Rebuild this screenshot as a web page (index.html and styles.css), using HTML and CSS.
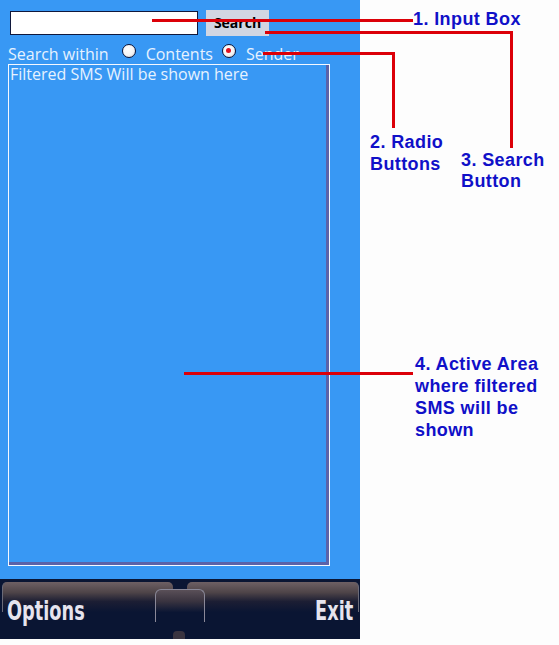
FILE: index.html
```html
<!DOCTYPE html>
<html>
<head>
<meta charset="utf-8">
<link rel="stylesheet" href="styles.css">
</head>
<body>
<div class="page">
  <div class="phone">
    <div class="search-row">
      <div class="input-box"></div>
      <div class="search-btn">Search</div>
    </div>
    <div class="filter-row">
      <span class="lbl">Search within</span>
      <span class="radio first"></span>
      <span class="lbl">Contents</span>
      <span class="radio checked"></span>
      <span class="lbl">Sender</span>
    </div>
    <div class="results">
      <div class="results-inner">Filtered SMS Will be shown here</div>
    </div>
    <div class="spacer"></div>
    <div class="softkeys">
      <div class="tab tab-left"></div>
      <div class="tab tab-right"></div>
      <div class="notch"></div>
      <div class="bump"></div>
      <span class="sk sk-left">Options</span>
      <span class="sk sk-right">Exit</span>
    </div>
  </div>

  <div class="overlay">
    <div class="line h l1"></div>
    <div class="line h l2"></div>
    <div class="line v l2v"></div>
    <div class="line h l3"></div>
    <div class="line v l3v"></div>
    <div class="line h l4"></div>
    <div class="note n1">1. Input Box</div>
    <div class="note n2">2. Radio<br>Buttons</div>
    <div class="note n3">3. Search<br>Button</div>
    <div class="note n4">4. Active Area<br>where filtered<br>SMS will be<br>shown</div>
  </div>
</div>
</body>
</html>
```

FILE: styles.css
```css
* { box-sizing: border-box; }
html, body { margin: 0; padding: 0; background: #fdfdfd; }
.page {
  position: relative;
  width: 559px;
  height: 645px;
  display: flex;
}
.phone {
  width: 360px;
  height: 639px;
  background: #3898f4;
  display: flex;
  flex-direction: column;
  font-family: "Open Sans", "DejaVu Sans", sans-serif;
}
.search-row {
  display: flex;
  align-items: flex-start;
  gap: 8px;
  padding: 10px 0 0 10px;
  height: 36px;
}
.input-box {
  margin-top: 1px;
  width: 188px;
  height: 24px;
  background: #fff;
  border: 1px solid #10183c;
}
.search-btn {
  width: 63px;
  height: 26px;
  background: #d2d6e2;
  color: #000;
  font-weight: 700;
  font-size: 14px;
  line-height: 26px;
  text-align: center;
}
.filter-row {
  display: flex;
  align-items: flex-start;
  height: 28px;
  padding: 8px 0 0 8px;
  color: #e6f2ff;
  font-size: 16px;
}
.filter-row .lbl { line-height: 20px; }
.radio {
  width: 14px;
  height: 14px;
  border-radius: 50%;
  border: 1.5px solid #0c1438;
  background: radial-gradient(circle at 40% 35%, #ffffff 0%, #f4f4f4 55%, #c8c8d0 100%);
  margin: 0 10px 0 9px;
  position: relative;
}
.radio.first { margin-left: 13px; }
.radio.checked::after {
  content: "";
  position: absolute;
  left: 3px;
  top: 3px;
  width: 5px;
  height: 5px;
  border-radius: 50%;
  background: #e01020;
}
.results {
  margin: 0 0 0 8px;
  width: 322px;
  height: 502px;
  border: 1px solid #f4f8ff;
}
.results-inner {
  height: 100%;
  border-right: 3px solid #5b62a8;
  border-bottom: 3px solid #5b62a8;
  color: #e6f2ff;
  font-size: 16px;
  line-height: 18px;
  padding: 0 0 0 1px;
}
.spacer { flex: 1; }
.softkeys {
  position: relative;
  height: 60px;
  background: #0a1533;
  display: flex;
  justify-content: space-between;
  align-items: flex-start;
  padding: 17px 7px 0 7px;
}
.tab {
  position: absolute;
  top: 3px;
  height: 30px;
  border-radius: 5px 5px 0 0;
  background: linear-gradient(#6e6064 0%, #4e4448 35%, rgba(40,36,52,0.6) 65%, rgba(10,21,51,0) 100%);
}
.tab-left { left: 2px; width: 171px; border-left: 1px solid #6a6a78; }
.tab-right { left: 187px; width: 172px; border-right: 1px solid #6a6a78; }
.notch {
  position: absolute;
  left: 155px;
  top: 10px;
  width: 50px;
  height: 33px;
  border-radius: 6px 6px 0 0;
  border: 1px solid #8a8898;
  border-bottom: none;
  background: linear-gradient(#5a5058 0%, #3a3440 35%, #0a1533 70%);
}
.bump {
  position: absolute;
  left: 173px;
  top: 52px;
  width: 12px;
  height: 8px;
  border-radius: 4px 4px 0 0;
  background: #3a3440;
}
.sk {
  position: relative;
  font-family: "DejaVu Sans Condensed", "DejaVu Sans", sans-serif;
  font-stretch: condensed;
  font-weight: 700;
  font-size: 27px;
  color: #e6e4ee;
  line-height: 30px;
  transform: scaleX(0.73);
}
.sk-left { transform-origin: left top; }
.sk-right { transform-origin: right top; }
.overlay {
  position: absolute;
  inset: 0;
  pointer-events: none;
}
.line { position: absolute; background: #dc0008; }
.h { height: 3px; }
.v { width: 3px; }
.l1 { left: 152px; top: 19px; width: 261px; }
.l2 { left: 265px; top: 31px; width: 248px; }
.l2v { left: 510px; top: 31px; height: 117px; }
.l3 { left: 263px; top: 52px; width: 132px; }
.l3v { left: 392px; top: 52px; height: 76px; }
.l4 { left: 184px; top: 372px; width: 229px; }
.note {
  position: absolute;
  font-family: "Liberation Sans", Arial, sans-serif;
  font-weight: 700;
  font-size: 18px;
  letter-spacing: 0.4px;
  line-height: 22px;
  color: #1010c8;
  white-space: nowrap;
}
.n1 { left: 413px; top: 8px; }
.n2 { left: 370px; top: 131px; }
.n3 { left: 461px; top: 150px; line-height: 21px; }
.n4 { left: 415px; top: 353px; }
```
